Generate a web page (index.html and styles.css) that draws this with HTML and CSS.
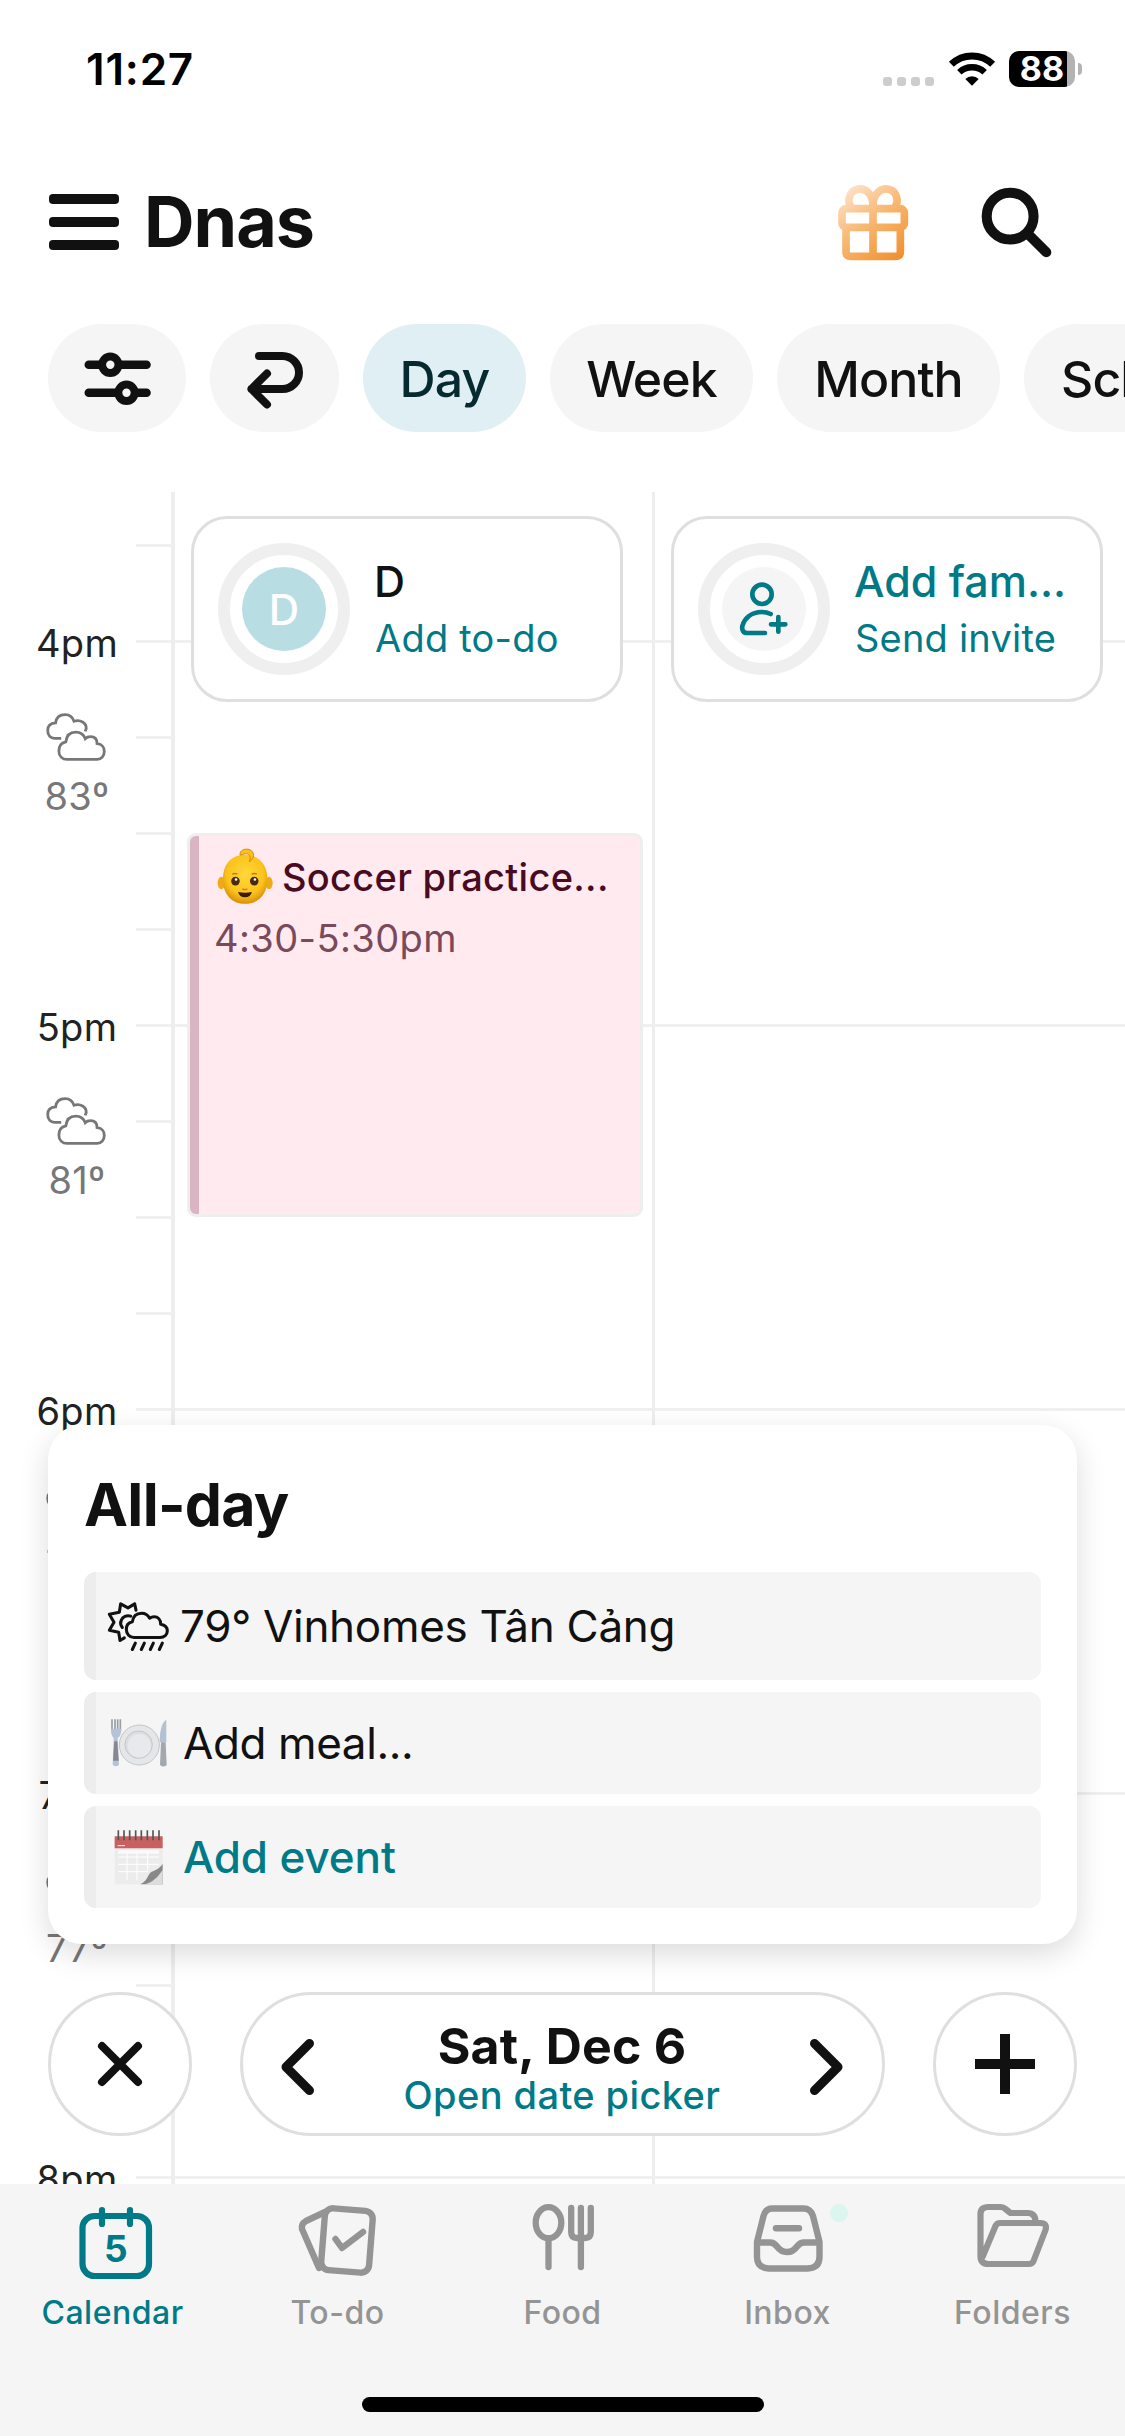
FILE: index.html
```html
<!DOCTYPE html>
<html lang="en">
<head>
<meta charset="utf-8">
<title>Dnas calendar</title>
<link rel="stylesheet" href="styles.css">
</head>
<body>
<svg class="defs" width="0" height="0">
  <symbol id="clouds" viewBox="12 20 186 152">
    <g fill="none" stroke="#777" stroke-width="8.5">
      <path d="M60 100H40c-13 0-21-10-21-24 0-13 8-22 24-23 2-16 13-25 29-25 14 0 23 8 27 20 19-6 38 5 37 22l-3 9"/>
      <path d="M78 164h92c12 0 21-10 21-24s-9-23-22-24c0-14-8-21-20-21-7 0-12 2-16 6-4-12-15-20-29-20-18 0-28 12-30 30-14 3-21 13-21 28 0 16 11 25 25 25z"/>
    </g>
  </symbol>
</svg>

<div class="status">
  <span class="status-time">11:27</span>
  <span class="status-dots"><i></i><i></i><i></i><i></i></span>
  <svg class="wifi" viewBox="384 64 138 102"><g fill="none" stroke="#000"><path stroke-width="21" d="M391 101a89 89 0 0 1 124 0"/><path stroke-width="19" d="M415 125a55 55 0 0 1 76 0"/></g><path d="M453 165l-20-20a29 29 0 0 1 40 0z"/></svg>
  <span class="battery">88</span><i class="battery-nub"></i>
</div>

<header class="header">
  <div class="burger"><i></i><i></i><i></i></div>
  <h1 class="title">Dnas</h1>
  <svg class="gift" viewBox="54 462 210 225">
    <defs><linearGradient id="gold" gradientUnits="userSpaceOnUse" x1="80" y1="470" x2="245" y2="685"><stop offset="0" stop-color="#fde3cb"/><stop offset=".45" stop-color="#f8b873"/><stop offset="1" stop-color="#f08f2c"/></linearGradient></defs>
    <g fill="none" stroke="url(#gold)" stroke-width="23">
      <rect x="66" y="533" width="187" height="56" rx="12"/>
      <path d="M78 592v70q0 14 14 14h135q14 0 14-14v-70M159 500v176"/>
      <path d="M96 532q-14-18-7-36c8-24 37-28 53-14q16 14 17 40q1-26 17-40c16-14 45-10 53 14q7 18-7 36"/>
    </g>
  </svg>
  <svg class="search" viewBox="485 470 212 212"><g fill="none" stroke="#111" stroke-width="30" stroke-linecap="round"><circle cx="572" cy="557" r="70"/><path d="M629 614l51 51"/></g></svg>
</header>

<nav class="chips">
  <span class="chip chip-filter"><svg width="68" height="56" viewBox="82.500 348.500 68 56"><g fill="none" stroke="#111" stroke-width="8.600" stroke-linecap="round"><path d="M88.300 362.300H146M88.300 390.300H146"/><g fill="#f5f5f5" stroke-width="8"><circle cx="109.800" cy="362.300" r="8.200"/><circle cx="126" cy="390.300" r="8.200"/></g></g></svg></span>
  <span class="chip chip-return"><svg width="60" height="58" viewBox="244 348 60 58"><path fill="none" stroke="#111" stroke-width="8" stroke-linecap="round" stroke-linejoin="round" d="M258 354h23.500a16.500 16.500 0 0 1 0 33H250.500M266 371.500L250.500 387l15.500 15.500"/></svg></span>
  <span class="chip chip-day">Day</span>
  <span class="chip chip-week">Week</span>
  <span class="chip chip-month">Month</span>
  <span class="chip chip-schedule">Schedule</span>
</nav>

<main class="timeline">
  <div class="gutter">
    <div class="hour"><span class="hour-label">4pm</span><svg class="hour-icon"><use href="#clouds"/></svg><span class="hour-temp">83º</span></div>
    <div class="hour"><span class="hour-label">5pm</span><svg class="hour-icon"><use href="#clouds"/></svg><span class="hour-temp">81º</span></div>
    <div class="hour"><span class="hour-label">6pm</span><svg class="hour-icon"><use href="#clouds"/></svg><span class="hour-temp">79º</span></div>
    <div class="hour"><span class="hour-label">7pm</span><svg class="hour-icon"><use href="#clouds"/></svg><span class="hour-temp">77º</span></div>
    <div class="hour"><span class="hour-label">8pm</span></div>
  </div>

  <section class="column">
    <div class="person">
      <div class="ring"><span class="avatar">D</span></div>
      <div class="person-text"><span class="person-name">D</span><span class="person-action">Add to-do</span></div>
    </div>
    <article class="event">
      <div class="event-title">
        <svg class="baby" viewBox="36 22 170 172">
          <defs><radialGradient id="skin" cx=".5" cy=".4" r=".6"><stop offset="0" stop-color="#ffd83a"/><stop offset=".7" stop-color="#fcc21b"/><stop offset="1" stop-color="#d9900a"/></radialGradient></defs>
          <ellipse cx="49" cy="128" rx="11" ry="19" fill="#f0aa15"/><ellipse cx="194" cy="128" rx="11" ry="19" fill="#f0aa15"/>
          <path fill="url(#skin)" d="M121 42c42 0 68 30 68 74 0 46-28 75-68 75s-67-29-67-75c0-44 25-74 67-74z"/>
          <path fill="#fcc21b" stroke="#cf8a08" stroke-width="3" d="M106 43c-2-14 14-22 30-16 15 7 15 26-2 36 5-12 4-20-6-24-8-2-12 3-22 4z"/>
          <circle cx="92" cy="122" r="13" fill="#4a2a10"/><circle cx="149" cy="122" r="13" fill="#4a2a10"/><circle cx="94" cy="117" r="4" fill="#fff"/><circle cx="151" cy="117" r="4" fill="#fff"/>
          <path d="M82 101q8-4 16 0M141 101q8-4 16 0M113 145q7 6 15 0" fill="none" stroke="#c37d0c" stroke-width="4"/>
          <path fill="#3a1a10" d="M100 155q21 5 42 0-4 16-21 16t-21-16z"/>
        </svg>
        <span>Soccer practice...</span>
      </div>
      <div class="event-time">4:30-5:30pm</div>
    </article>
  </section>

  <section class="column">
    <div class="person">
      <div class="ring"><span class="avatar avatar-invite"><svg width="50" height="56" viewBox="298 274 150 168"><g fill="none" stroke="#007a87" stroke-width="14" stroke-linecap="round"><circle cx="367" cy="314" r="29"/><path d="M393 373q-12-6-26-6c-34 0-53 20-59 42-2 13 3 21 14 21h54M416 382v44M394 404h43"/></g></svg></span></div>
      <div class="person-text"><span class="person-name teal">Add fam...</span><span class="person-action">Send invite</span></div>
    </div>
  </section>

  <section class="allday">
    <h2 class="allday-title">All-day</h2>
    <div class="row row-weather">
      <svg width="64" height="53" viewBox="18 28 192 158"><g fill="none" stroke="#111" stroke-width="9.200" stroke-linecap="round" stroke-linejoin="round"><path d="M104 140h76c13 0 22-8 22-20 0-11-8-18-20-20 0-14-8-22-20-22-6 0-10 2-13 4-5-9-14-15-24-15-16 0-26 10-28 26-12 3-18 11-18 22 0 15 10 25 23 25z"/><path d="M108 58l-4-19-20 12-22-12-4 25-30 6 14 24-14 24 28 6 4 25 13-8M92 76c-12-4-24 2-28 12-4 8-1 17 3 22M106 157l-9 19M133 157l-9 19M160 157l-9 19M187 157l-9 19"/></g></svg>
      <span class="weather-text">79° Vinhomes Tân Cảng</span>
    </div>
    <div class="row">
      <svg class="emoji" width="58" height="50" viewBox="32 382 172 150">
        <circle cx="119" cy="463" r="60" fill="#e4e6e8" stroke="#c3c6c8" stroke-width="3"/><circle cx="117" cy="462" r="41" fill="#dcdfe2" stroke="#c4c7ca" stroke-width="3"/><circle cx="119" cy="465" r="35" fill="#e7e9eb"/>
        <g fill="none" stroke="#999ea3" stroke-width="5"><path d="M37 386v34M46 386v34M54 386v34M62 386v34"/></g>
        <path fill="#b4c3d8" d="M34 414h31q0 22-11 28l4 80q-9 10-19 0l3-80q-9-8-8-28z"/><path fill="#84898f" d="M44 452h9l4 58H40z"/>
        <path fill="#b3c2d3" d="M200 387c-14 8-20 34-20 68h20z"/><path fill="#a3a8ae" d="M184 455h14l3 68q-10 9-20 0z"/>
      </svg>
      <span class="meal-text">Add meal...</span>
    </div>
    <div class="row">
      <svg class="emoji" width="58" height="56" viewBox="32 716 172 168">
        <path fill="#ececec" d="M45 740h144v142H45z"/><path fill="#c85f60" d="M45 738h144v36H45z"/>
        <g stroke="#fff" stroke-width="3" fill="none"><path d="M56 800h122M56 822h122M56 844h90M82 780v90M112 780v90M144 780v60M54 766h22"/></g>
        <path fill="#fafafa" d="M56 780h122v10H56z"/>
        <path fill="#888" d="M122 882c24-12 22-32 34-38 12-4 24-10 33-24v62z"/><path fill="#ddd" d="M136 882c24-8 38-20 53-44v44z"/>
        <g stroke="#555" stroke-width="5"><path d="M56 720v30M73 720v30M90 720v30M108 720v30M125 720v30M143 720v30M160 720v30M178 720v30"/></g>
      </svg>
      <span class="addevent-text">Add event</span>
    </div>
  </section>

  <div class="controls">
    <span class="round"><svg width="48" height="48" viewBox="0 0 48 48"><path fill="none" stroke="#111" stroke-width="8" stroke-linecap="round" d="M6 6l36 36M42 6L6 42"/></svg></span>
    <div class="picker">
      <svg width="36" height="60" viewBox="280 2037 36 60"><path fill="none" stroke="#111" stroke-width="9" stroke-linecap="round" stroke-linejoin="round" d="M310.500 2043.500L287 2067l23.500 23.500"/></svg>
      <div class="picker-text"><span class="picker-date">Sat, Dec 6</span><span class="picker-link">Open date picker</span></div>
      <svg width="36" height="60" viewBox="809 2037 36 60"><path fill="none" stroke="#111" stroke-width="9" stroke-linecap="round" stroke-linejoin="round" d="M814.500 2043.500L838 2067l-23.500 23.500"/></svg>
    </div>
    <span class="round"><svg width="60" height="60" viewBox="0 0 60 60"><path fill="none" stroke="#111" stroke-width="10" d="M0 30h60M30 0v60"/></svg></span>
  </div>
</main>

<footer class="tabbar">
  <nav class="tabs">
    <div class="tab tab-active"><svg width="80" height="80" viewBox="72.500 2202 80 80"><g fill="none" stroke="#007a87" stroke-width="6.200" stroke-linecap="round"><rect x="82" y="2216" width="66.500" height="60" rx="12"/><path d="M101.500 2210v14M129.500 2210v14"/></g><text class="cal-day" x="115.300" y="2262" text-anchor="middle">5</text></svg><span>Calendar</span></div>
    <div class="tab"><svg width="84" height="80" viewBox="296 2202 84 80"><g fill="none" stroke="#949494" stroke-width="6.400" stroke-linecap="round" stroke-linejoin="round"><rect x="323" y="2209.500" width="48" height="62" rx="8" transform="rotate(4.500 347 2240)"/><path d="M325 2212l-19 9q-5 3-4 8l17 39M335.500 2239l6.500 9 21-16"/></g></svg><span>To-do</span></div>
    <div class="tab"><svg width="80" height="80" viewBox="522.500 2202 80 80"><g fill="none" stroke="#949494" stroke-width="6.300" stroke-linecap="round" stroke-linejoin="round"><ellipse cx="548" cy="2222.700" rx="12.800" ry="15.500"/><path d="M548 2240v27M570.700 2208v24q0 6 6 6h7.600q6 0 6-6v-24M580.400 2208v59"/></g></svg><span>Food</span></div>
    <div class="tab"><svg width="80" height="80" viewBox="748 2202 80 80"><g fill="none" stroke="#949494" stroke-width="6.400" stroke-linecap="round" stroke-linejoin="round"><path d="M772.500 2208.500h31q7 0 9.500 7.500l6.500 26v15q0 11-12 11.500h-38.500q-12-.5-12-11.500v-15l6.500-26q2-7.500 9-7.500z"/><path stroke-linecap="butt" d="M757 2242.500h13q4 0 7 4 4 5.500 10 5.500t10-5.500q3-4 7-4h15"/><path d="M776 2228.300h23"/></g></svg><i class="badge"></i><span>Inbox</span></div>
    <div class="tab"><svg width="80" height="80" viewBox="972.500 2202 80 80"><g fill="none" stroke="#949494" stroke-width="6.200" stroke-linecap="round" stroke-linejoin="round"><path d="M1035 2222q0-9-8-9h-17l-5-4q-2-2-5-2h-12q-8 0-8 7v42q0 8 8 8h40q4 0 5-3l12-31q2-7-5-7h-40q-4 0-5 3l-13 31"/></g></svg><span>Folders</span></div>
  </nav>
  <div class="home"></div>
</footer>
</body>
</html>
```
FILE: styles.css
```css
* { box-sizing: border-box; }
body {
  margin: 0;
  width: 1125px;
  height: 2436px;
  overflow: hidden;
  display: flex;
  flex-direction: column;
  background: #fff;
  color: #111;
  font-family: Inter, "Liberation Sans", sans-serif;
  white-space: nowrap;
}
svg { display: block; flex: none; overflow: visible; }
.defs { position: absolute; }

/* Status bar */
.status { height: 138px; display: flex; align-items: center; padding: 0 43px 0 86px; }
.status-time { flex: 1; font-size: 44px; font-weight: 600; line-height: 48px; letter-spacing: .8px; color: #000; }
.status-dots { display: flex; gap: 5px; margin: 24px 15px 0 0; }
.status-dots i { width: 9px; height: 9px; border-radius: 3px; background: #cdcdcd; }
.wifi { width: 46px; height: 34px; margin-right: 14px; }
.battery {
  width: 66px; height: 36px; border-radius: 10px;
  background: linear-gradient(90deg, #000 58px, #b3b3b3 58px);
  color: #fff; font-size: 34px; font-weight: 700; line-height: 36px; text-align: center;
}
.battery-nub { width: 4px; height: 12px; margin-left: 3px; border-radius: 0 4px 4px 0; background: #b3b3b3; }

/* Header */
.header { height: 168px; display: flex; align-items: center; padding: 0 73px 0 49px; }
.burger { display: flex; flex-direction: column; gap: 13px; margin-right: 25px; }
.burger i { width: 70px; height: 10px; border-radius: 4px; background: #111; }
.title { flex: 1; margin: 0; font-size: 70px; font-weight: 700; line-height: 80px; letter-spacing: -1px; }
.gift { width: 70px; height: 75px; margin-right: 73px; }
.search { width: 71px; height: 71px; }

/* View chips */
.chips { height: 186px; padding: 18px 0 0 48px; display: flex; gap: 24px; align-items: flex-start; overflow: hidden; }
.chip {
  height: 108px; flex: none; border-radius: 54px; background: #f5f5f5;
  display: flex; align-items: center; justify-content: center;
  padding-top: 1px;
  font-size: 50px; font-weight: 500; letter-spacing: -.9px;
}
.chip-filter { width: 138px; }
.chip-return { width: 129px; }
.chip-day { width: 163px; background: #dfeff3; color: #062a30; }
.chip-week { width: 203px; }
.chip-month { width: 223px; }
.chip-schedule { width: 290px; justify-content: flex-start; padding-left: 37px; }

/* Timeline */
.timeline {
  position: relative; height: 1692px; overflow: hidden;
  display: grid; grid-template-columns: 175px 480px 1fr;
  background:
    linear-gradient(#eee, #eee) 171px 0 / 4px 100% no-repeat,
    linear-gradient(#eee, #eee) 652px 0 / 3px 100% no-repeat,
    linear-gradient(#f0f0f0 3px, transparent 3px) 136px 148px / 100% 384px repeat-y,
    linear-gradient(#f0f0f0 3px, transparent 3px) 136px 52px / 35px 96px repeat-y;
}
.gutter { width: 154px; padding-top: 147px; }
.hour { height: 384px; display: flex; flex-direction: column; align-items: center; font-size: 38px; line-height: 48px; letter-spacing: .3px; }
.hour-label { margin-top: -20px; color: #222; }
.hour-icon { width: 62px; height: 50px; margin: 45px 3px 0 0; }
.hour-temp { margin-top: 10px; color: #777; }

.person {
  width: 432px; height: 186px; margin: 24px 0 0 16px; padding-left: 24px;
  display: flex; align-items: center; gap: 24px;
  border: 3px solid #dfdfdf; border-radius: 36px; background: #fff;
}
.ring {
  width: 132px; height: 132px; border: 12px solid #efefef; border-radius: 50%;
  display: flex; align-items: center; justify-content: center;
}
.avatar {
  width: 84px; height: 84px; border-radius: 50%; background: #b8dee4; color: #fff;
  display: flex; align-items: center; justify-content: center;
  font-size: 42px; font-weight: 500;
}
.avatar-invite { background: #f5f5f5; }
.person-text { display: flex; flex-direction: column; padding-top: 1px; }
.person-name { font-size: 43px; font-weight: 500; line-height: 56px; }
.person-action { padding-left: 1px; font-size: 38px; line-height: 58px; letter-spacing: .2px; color: #007a87; }
.teal { color: #007a87; }

.event {
  width: 456px; height: 384px; margin: 131px 0 0 12px; padding: 15px 0 0 14px;
  border: 3px solid #eee; border-radius: 9px; color: #4a0a20;
  background: linear-gradient(90deg, #d9b5c3 9px, #ffeaf0 9px);
}
.event-title { display: flex; align-items: center; gap: 9px; height: 52px; padding-left: 13px; font-size: 38px; font-weight: 500; letter-spacing: .3px; }
.baby { width: 56px; height: 57px; margin-top: -2px; }
.event-time { padding: 1px 0 0 10px; font-size: 38px; line-height: 68px; letter-spacing: .4px; color: #7a4a5a; }

/* All-day panel */
.allday {
  position: absolute; left: 48px; top: 933px; width: 1029px; height: 519px;
  padding: 44px 36px 0; border-radius: 34px; background: #fff;
  box-shadow: 0 10px 30px rgba(0, 0, 0, .14);
}
.allday-title { margin: 0 0 31px; font-size: 59px; font-weight: 700; line-height: 72px; letter-spacing: -.7px; }
.row {
  height: 102px; margin-bottom: 12px; padding-left: 14px;
  display: flex; align-items: center; gap: 15px;
  border-left: 12px solid #ededed; border-radius: 12px; background: #f5f5f5;
  font-size: 44px;
}
.row-weather { height: 108px; padding-left: 10px; gap: 10px; }
.weather-text { letter-spacing: -.3px; }
.meal-text { letter-spacing: -.4px; }
.addevent-text { color: #007a87; font-weight: 500; letter-spacing: -.1px; }

/* Floating date controls */
.controls {
  position: absolute; left: 48px; right: 48px; top: 1500px;
  display: flex; justify-content: space-between;
}
.round, .picker { height: 144px; border: 3px solid #dfdfdf; border-radius: 72px; background: #fff; display: flex; align-items: center; }
.round { width: 144px; justify-content: center; }
.picker { width: 645px; padding: 6px 37px 0 36px; justify-content: space-between; }
.picker-text { display: flex; flex-direction: column; align-items: center; padding-top: 3px; }
.picker-date { font-size: 50px; font-weight: 700; line-height: 52px; letter-spacing: .2px; }
.picker-link { font-size: 38px; font-weight: 500; line-height: 46px; letter-spacing: .4px; color: #007a87; }

/* Tab bar */
.tabbar { height: 252px; background: #f5f5f5; display: flex; flex-direction: column; align-items: center; }
.tabs { width: 100%; height: 213px; display: flex; }
.tab { position: relative; width: 225px; padding-top: 18px; display: flex; flex-direction: column; align-items: center; color: #949494; font-size: 32px; font-weight: 500; line-height: 62px; letter-spacing: .5px; }
.tab-active { color: #007a87; }
.cal-day { fill: #007a87; font-size: 37px; font-weight: 700; letter-spacing: 0; }
.badge { position: absolute; left: 155px; top: 20px; width: 18px; height: 18px; border-radius: 50%; background: #dbf6ef; }
.home { width: 402px; height: 15px; border-radius: 8px; background: #000; }
```
